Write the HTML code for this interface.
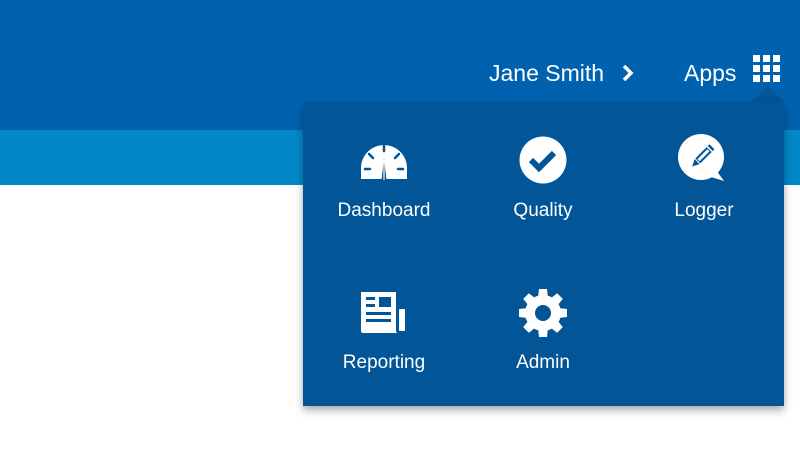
<!DOCTYPE html>
<html><head><meta charset="utf-8"><style>
*{margin:0;padding:0;box-sizing:border-box}
body{width:800px;height:450px;overflow:hidden;background:#fff;font-family:"Liberation Sans",sans-serif;position:relative}
.top{position:absolute;left:0;top:0;width:800px;height:130px;background:#0062AF}
.stripe{position:absolute;left:0;top:130px;width:800px;height:55px;background:#0288C9}
.t{position:absolute;color:#fff;font-size:23px;white-space:nowrap}
.panel{position:absolute;left:303px;top:102px;width:481px;height:304px;background:#025597;box-shadow:0 4px 8px rgba(0,0,0,.35)}
.arrow{position:absolute;left:752px;top:86px;width:0;height:0;border-left:16px solid transparent;border-right:16px solid transparent;border-bottom:16px solid #025597}
.lab{position:absolute;color:#fff;font-size:19px;width:160px;text-align:center;margin-left:-80px}
svg{position:absolute}
</style></head><body>
<div class="top"></div><div class="stripe"></div>
<div class="t" style="left:489px;top:60px">Jane Smith</div>
<svg style="left:621px;top:64px" width="14" height="18" viewBox="0 0 14 18"><path d="M3 2 L10 9 L3 16" stroke="#fff" stroke-width="3.5" fill="none"/></svg>
<div class="t" style="left:684px;top:60px">Apps</div>
<svg style="left:753px;top:55px" width="28" height="28" viewBox="0 0 28 28" fill="#fff">
<rect x="0" y="0" width="7" height="7"/><rect x="10" y="0" width="7" height="7"/><rect x="20" y="0" width="7" height="7"/>
<rect x="0" y="10" width="7" height="7"/><rect x="10" y="10" width="7" height="7"/><rect x="20" y="10" width="7" height="7"/>
<rect x="0" y="20" width="7" height="7"/><rect x="10" y="20" width="7" height="7"/><rect x="20" y="20" width="7" height="7"/>
</svg>
<div class="arrow"></div>
<div class="panel"></div>
<!-- dashboard -->
<svg style="left:359px;top:140px" width="50" height="40" viewBox="0 0 50 40">
<path d="M2 39 L2 28 A23 23 0 0 1 48 28 L48 39 Z" fill="#fff"/>
<g stroke="#025597" stroke-width="2.5" stroke-linecap="round">
<line x1="25" y1="5" x2="25" y2="11"/><line x1="10" y1="14" x2="14" y2="18"/><line x1="40" y1="14" x2="36" y2="18"/>
<line x1="6" y1="29" x2="11" y2="29"/><line x1="39" y1="29" x2="44" y2="29"/></g>
<path d="M22.5 40 L25 18 L27.5 40Z" fill="#025597"/>
<line x1="25" y1="20" x2="25" y2="40" stroke="#fff" stroke-width="1.2"/>
</svg>
<!-- quality -->
<svg style="left:519px;top:136px" width="48" height="48" viewBox="0 0 48 48">
<circle cx="24" cy="24" r="23.5" fill="#fff"/>
<path d="M12 24 L20 32 L35 17" stroke="#025597" stroke-width="6" fill="none"/>
</svg>
<!-- logger -->
<svg style="left:678px;top:134px" width="50" height="50" viewBox="0 0 50 50">
<circle cx="23" cy="23" r="23" fill="#fff"/><path d="M38 36 L46 47 L33 43Z" fill="#fff"/>
<g transform="rotate(45 23 23)">
<rect x="20" y="8" width="7" height="20" fill="#025597"/>
<path d="M20 29 L27 29 L23.5 36Z" fill="#025597"/>
<rect x="22" y="13" width="3" height="14" fill="#fff"/>
<rect x="20" y="10.5" width="7" height="1.5" fill="#fff"/>
</g>
</svg>
<!-- reporting -->
<svg style="left:360px;top:291px" width="48" height="44" viewBox="0 0 48 44">
<path d="M1 1 L36 1 L36 40 Q36 42 38 42 L3 42 Q1 42 1 40 Z" fill="#fff"/>
<rect x="39" y="18" width="6" height="22" rx="1" fill="#fff"/>
<g fill="#025597"><rect x="6" y="6" width="9" height="3"/><rect x="6" y="13" width="9" height="3"/><rect x="19" y="6" width="12" height="10"/>
<rect x="6" y="21" width="25" height="3"/><rect x="6" y="28" width="25" height="3"/></g>
</svg>
<!-- admin gear -->
<svg style="left:519px;top:289px" width="48" height="48" viewBox="0 0 48 48">
<g fill="#fff" transform="translate(24 24)">
<circle r="18"/>
<g><path d="M-4 -24 L4 -24 L5 -15 L-5 -15Z"/><path d="M-4 24 L4 24 L5 15 L-5 15Z"/><path d="M-24 -4 L-24 4 L-15 5 L-15 -5Z"/><path d="M24 -4 L24 4 L15 5 L15 -5Z"/></g>
<g transform="rotate(45)"><path d="M-4 -24 L4 -24 L5 -15 L-5 -15Z"/><path d="M-4 24 L4 24 L5 15 L-5 15Z"/><path d="M-24 -4 L-24 4 L-15 5 L-15 -5Z"/><path d="M24 -4 L24 4 L15 5 L15 -5Z"/></g>
</g>
<circle cx="24" cy="24" r="8" fill="#025597"/>
</svg>
<div class="lab" style="left:384px;top:200px">Dashboard</div>
<div class="lab" style="left:543px;top:200px">Quality</div>
<div class="lab" style="left:704px;top:200px">Logger</div>
<div class="lab" style="left:384px;top:352px">Reporting</div>
<div class="lab" style="left:543px;top:352px">Admin</div>
</body></html>
